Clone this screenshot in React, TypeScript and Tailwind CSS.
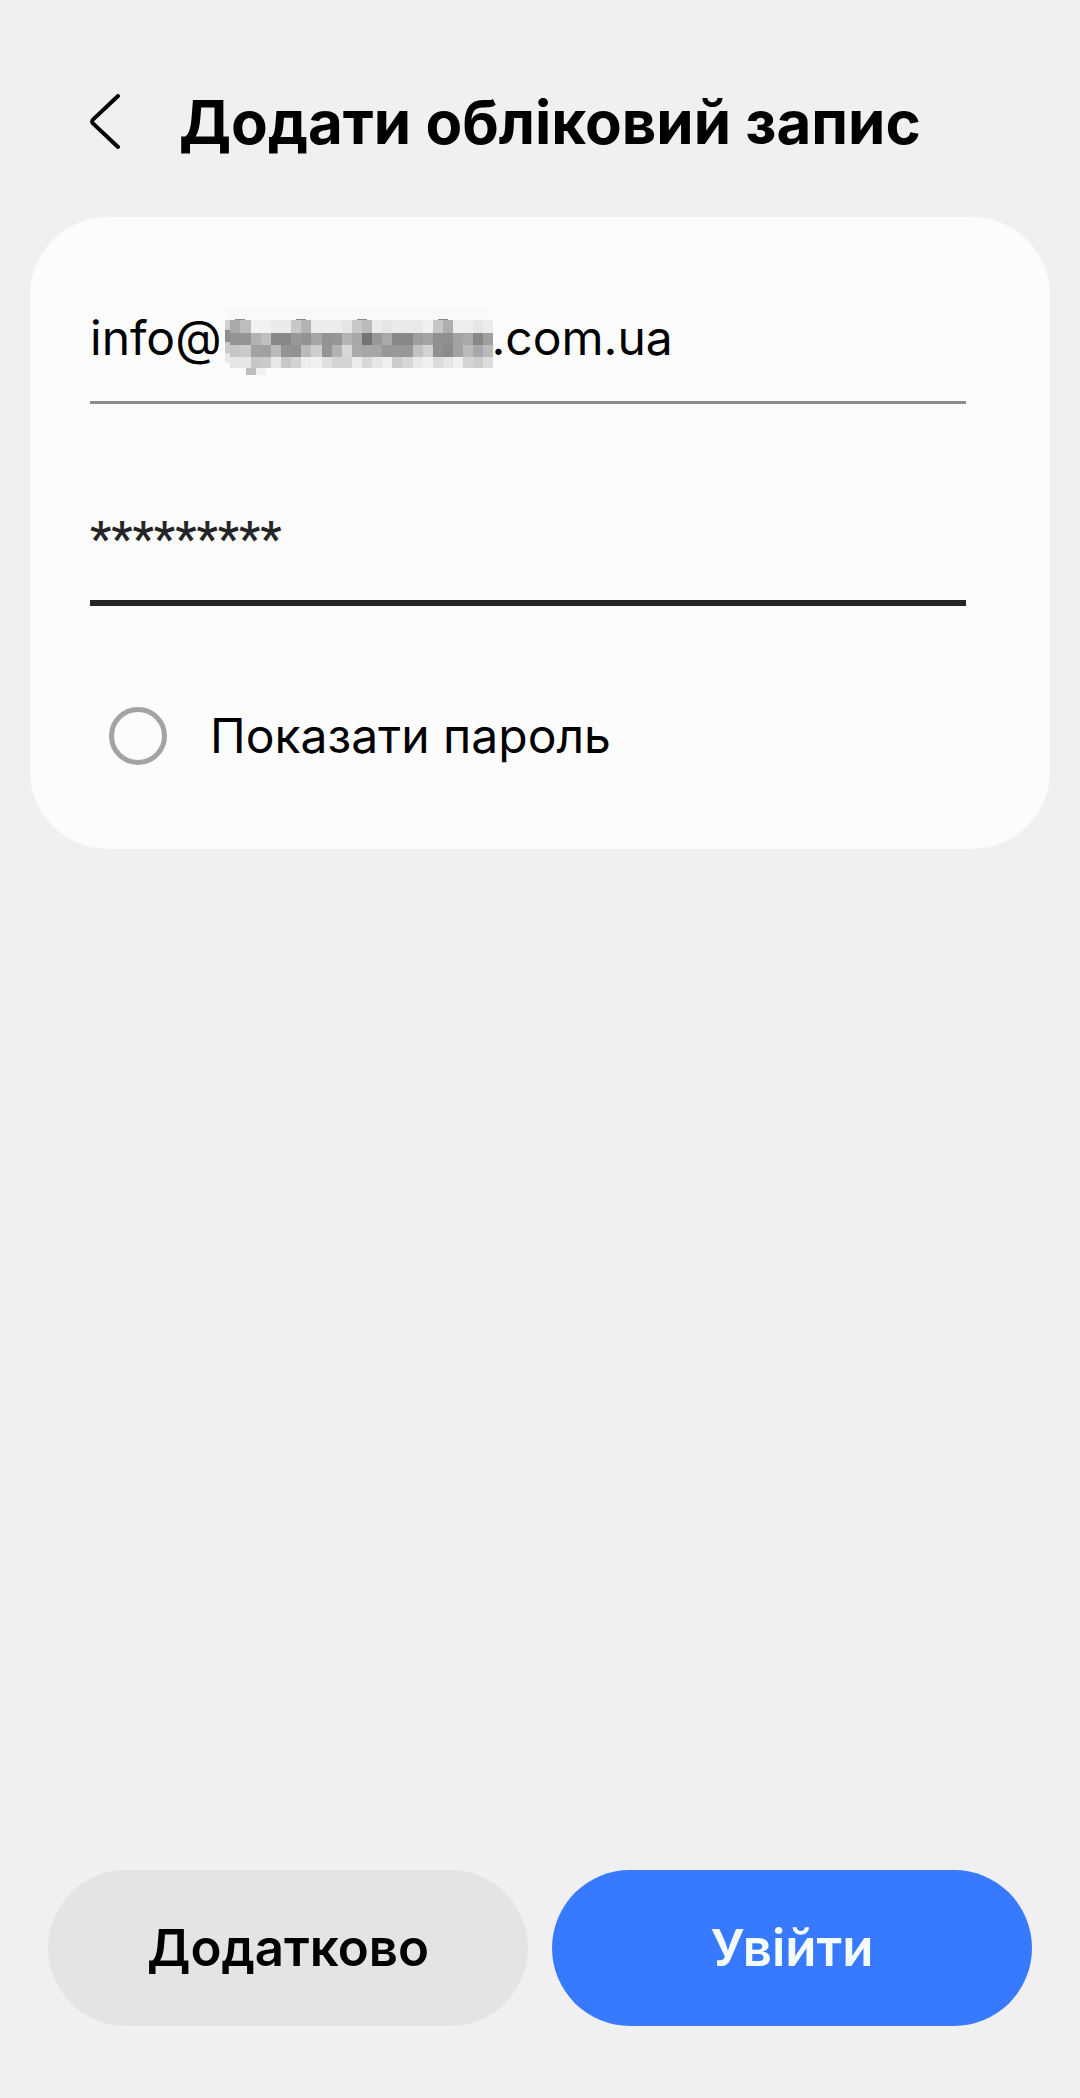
import { useState } from "react";

const COLUMN_EDGES = [5, 15, 26, 36, 46, 56, 66, 76, 86, 97, 107, 117, 127, 137, 147, 157, 167, 177, 188, 198, 208, 218, 228, 238, 248, 258, 268];

const ROWS = [
  { y: 13, h: 13, shades: "a9 bd f2 f2 ea ea c8 b4 ec ed ec e5 c8 bb ec e6 ea eb ea f0 c6 ae ee ee e6 ec" },
  { y: 26, h: 12, shades: "94 94 b2 bf 88 88 98 93 a6 93 96 b4 a8 74 98 a9 88 88 9e a3 90 90 a3 a9 88 a0" },
  { y: 38, h: 12, shades: "c6 cb a1 a1 ba 94 91 ba ce 94 b2 d8 aa a6 a6 97 99 98 c2 d2 91 8b a3 bb a8 bb" },
  { y: 50, h: 11, shades: "e6 e6 c7 ca e7 c7 d3 ed f0 e1 d4 d4 ec d8 e6 f0 cc d7 ea f0 dc e5 f0 d4 cc dc" },
];

// Pixelated patch that hides the mail domain.
function Mosaic() {
  return (
    <svg
      className="pointer-events-none absolute left-[135px] top-0 h-[68px] w-[268px]"
      viewBox="0 0 268 68"
      shapeRendering="crispEdges"
      aria-hidden="true"
    >
      <rect width="268" height="68" fill="#fcfcfc" />
      <rect width="263" height="13" fill="#f9f9f9" />
      {[10, 71, 132, 213].map((x) => (
        <rect key={x} x={x} y="12" width="10" height="1" fill="#888888" />
      ))}
      <rect y="13" width="5" height="10" fill="#d0d0d0" />
      <rect y="23" width="5" height="12" fill="#8e8e8e" />
      <rect y="35" width="5" height="11" fill="#cacaca" />
      <rect y="46" width="5" height="10" fill="#e9e9e9" />
      {ROWS.map((row) =>
        row.shades.split(" ").map((s, i) => (
          <rect
            key={`${row.y}-${i}`}
            x={COLUMN_EDGES[i]}
            y={row.y}
            width={COLUMN_EDGES[i + 1] - COLUMN_EDGES[i]}
            height={row.h}
            fill={`#${s}${s}${s}`}
          />
        ))
      )}
      <rect x="21" y="61" width="10" height="7" fill="#bdbdbd" />
      <rect x="31" y="61" width="10" height="7" fill="#f1f1f1" />
    </svg>
  );
}

export default function App() {
  const [email, setEmail] = useState("info@" + "\u00a0".repeat(20) + ".com.ua");
  const [password, setPassword] = useState("*********");

  return (
    <main className="flex min-h-screen flex-col bg-[#f0f0f2] pb-[72px] pt-[86px] font-['Inter','Noto_Sans',sans-serif] text-black">
      <header className="flex items-center gap-[59px] px-[90px]">
        <button type="button" aria-label="Назад" className="shrink-0">
          <svg className="h-14 w-[30px]" viewBox="0 0 30 56" fill="none" stroke="currentColor" strokeWidth="4" strokeLinecap="round" strokeLinejoin="round">
            <path d="M28 2 3.2 25.4Q1 27.5 3.2 29.6L28 53" />
          </svg>
        </button>
        <h1 className="whitespace-nowrap text-[60px] font-bold leading-[72px]">Додати обліковий запис</h1>
      </header>

      <form id="login" className="flex flex-1 flex-col" onSubmit={(e) => e.preventDefault()}>
        <section className="mx-[30px] mt-[59px] rounded-[78px] bg-[#fcfcfc] pb-[83px] pl-[60px] pr-[84px] pt-[90px]">
          <div className="relative">
            <input
              type="text"
              aria-label="Електронна пошта"
              value={email}
              onChange={(e) => setEmail(e.target.value)}
              className="block h-[97px] w-full border-b-[3px] border-[#8c8c8c] bg-transparent pb-[34px] text-[48px] leading-[60px] outline-none"
            />
            <Mosaic />
          </div>
          <input
            type="text"
            aria-label="Пароль"
            value={password}
            onChange={(e) => setPassword(e.target.value)}
            className="mt-[104px] block h-[98px] w-full border-b-[6px] border-[#252525] bg-transparent pb-8 font-['Roboto'] text-[48px] font-medium leading-[60px] text-[#252525] outline-none"
          />
          <label className="mt-[100px] flex items-center gap-[43px] pl-[19px] text-[48px] leading-[60px]">
            <input
              type="checkbox"
              className="size-[58px] shrink-0 appearance-none rounded-full border-[5px] border-[#a3a3a5] checked:border-[#387aff] checked:bg-[#387aff]"
            />
            Показати пароль
          </label>
        </section>

        <footer className="mt-auto flex gap-6 px-12">
          <button type="button" className="h-[156px] flex-1 rounded-full bg-[#e4e4e6] text-[51px] font-semibold leading-[60px]">
            Додатково
          </button>
          <button type="submit" className="h-[156px] flex-1 rounded-full bg-[#387aff] text-[51px] font-semibold leading-[60px] text-[#f5fcff]">
            Увійти
          </button>
        </footer>
      </form>
    </main>
  );
}
